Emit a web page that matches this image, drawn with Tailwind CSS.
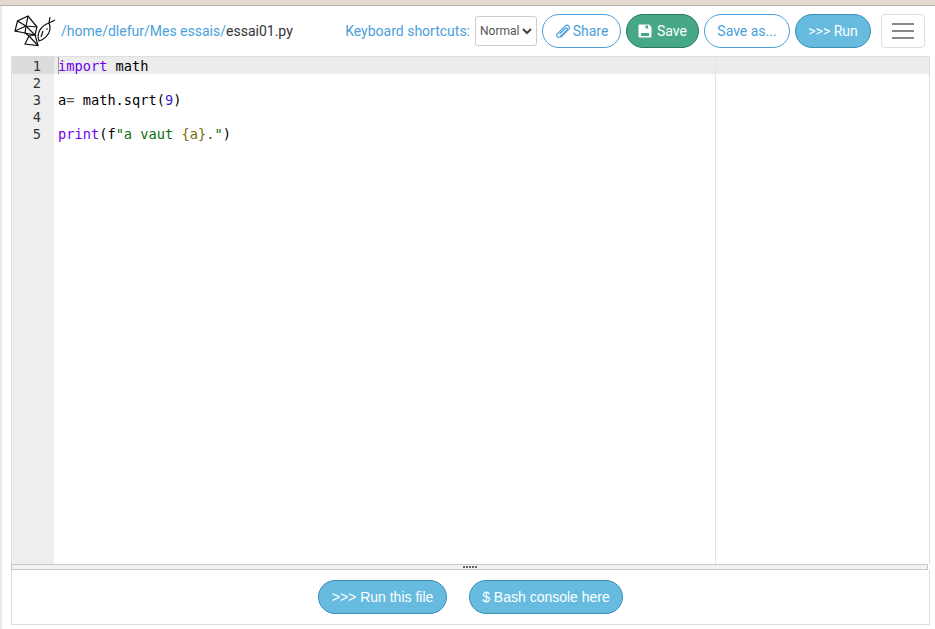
<!DOCTYPE html>
<html lang="en">
  <head>
    <meta charset="UTF-8" />
    <title>essai01.py</title>
    <script src="https://cdn.jsdelivr.net/npm/@tailwindcss/browser@4"></script>
  </head>
  <body class="h-screen overflow-hidden bg-white font-['Roboto',sans-serif]">
    <div class="h-[6px] border-b border-[#b8b2a7] bg-[#e2dacf]"></div>
    <div class="flex h-[623px] flex-col border-l-2 border-[#efe9e0] pl-[9px] pr-[5px]">
      <!-- top bar -->
      <header class="flex h-[50px] items-center pr-[5px] text-[14px] text-[#4a9fdc]">
        <svg class="ml-[3px] h-[32px] w-[44px] shrink-0" viewBox="14 15 44 32" fill="none" stroke="#111" stroke-width="1.2">
          <path d="M15 31 L17.5 21 L28 16 L37 27 L35 35 L38 45.5 L25 44 L29 36 L25 33 Z" />
          <path d="M17.5 21 L26 26 L28 16 M26 26 L37 27 M15 31 L26 26 L25 33 L35 35 L26 26 M29 36 L38 45.5 M29 36 L35 35" />
          <path d="M39 41 C36 33 41 26 49 23 C52 30 48 38 39 41 Z" />
          <path d="M49 23 L50 17 M49 23 L55 20" />
          <path d="M43 31 L41 37" />
          <circle cx="47" cy="29" r="0.8" fill="#111" stroke="none" />
        </svg>
        <div class="ml-[3px]">
          <span>/home/dlefur/Mes essais/</span><span class="text-[#333]">essai01.py</span>
        </div>
        <div class="ml-auto flex items-center">
          <span>Keyboard shortcuts:</span>
          <div class="ml-[5px] flex h-[30px] w-[62px] items-center justify-between rounded-[3px] border border-[#ccc] bg-white pr-[4px] pl-[4px] text-[12px] text-[#555]">
            Normal
            <svg class="h-[8px] w-[10px]" viewBox="0 0 10 8" fill="none" stroke="#444" stroke-width="2"><path d="M1 2 L5 6 L9 2" /></svg>
          </div>
          <button class="ml-[5px] flex h-[34px] w-[79px] items-center justify-center gap-[2px] rounded-full border border-[#4a9fdc] bg-white">
            <svg class="h-[16px] w-[16px]" viewBox="0 0 14 14" fill="none" stroke="#4a9fdc" stroke-width="1"><path d="M5 12.5 L12 5.5 C13.8 3.5 11 0.5 9 2.5 L2 9.5 C0.5 11.5 2.5 13.5 4.5 12 L10.5 6 C11.5 5 10.2 3.6 9 4.6 L4 9.6" /></svg>
            Share
          </button>
          <button class="ml-[5px] flex h-[34px] w-[73px] items-center justify-center gap-[5px] rounded-full border border-[#2b7a5e] bg-[#47a886] text-white">
            <svg class="h-[14px] w-[14px]" viewBox="0 0 14 14" fill="#fff"><path fill-rule="evenodd" d="M0.5 1.5 Q0.5 0.5 1.5 0.5 L11 0.5 L13.5 3 L13.5 12.5 Q13.5 13.5 12.5 13.5 L1.5 13.5 Q0.5 13.5 0.5 12.5 Z M7.5 1.5 L7.5 4.5 L10 4.5 L10 1.5 Z M3 9 L3 12 L11 12 L11 9 Z" /></svg>
            Save
          </button>
          <button class="ml-[5px] h-[34px] w-[86px] rounded-full border border-[#4a9fdc] bg-white">Save as...</button>
          <button class="ml-[5px] h-[34px] w-[76px] rounded-full border border-[#3c8fb5] bg-[#66bbdf] text-white">&gt;&gt;&gt; Run</button>
          <button class="ml-[10px] flex h-[34px] w-[44px] flex-col items-center justify-center gap-[5px] rounded-[4px] border border-[#ddd] bg-white">
            <span class="h-[2px] w-[22px] bg-[#888]"></span>
            <span class="h-[2px] w-[22px] bg-[#888]"></span>
            <span class="h-[2px] w-[22px] bg-[#888]"></span>
          </button>
        </div>
      </header>

      <!-- editor -->
      <div class="relative flex h-[508px] w-[919px] border-x border-t border-[#ddd] font-['DejaVu_Sans_Mono',monospace] text-[13.68px] leading-[17px]">
        <div class="w-[42px] shrink-0 bg-[#eeeeee] text-right text-[#333]">
          <div class="h-[17px] bg-[#dcdcdc] pt-px pr-[13px]">1</div>
          <div class="h-[17px] pt-px pr-[13px]">2</div>
          <div class="h-[17px] pt-px pr-[13px]">3</div>
          <div class="h-[17px] pt-px pr-[13px]">4</div>
          <div class="h-[17px] pt-px pr-[13px]">5</div>
        </div>
        <div class="relative flex-1 text-black">
          <div class="h-[17px] bg-[#ececec] pt-px pl-[4px]"><span class="text-[#6d00f0]">import</span> math</div>
          <div class="h-[17px]"></div>
          <div class="h-[17px] pt-px pl-[4px]">a<span class="text-[#555]">=</span> math.sqrt(<span class="text-[#3a1ad0]">9</span>)</div>
          <div class="h-[17px]"></div>
          <div class="h-[17px] pt-px pl-[4px]"><span class="text-[#6d00f0]">print</span>(f<span class="text-[#0b6b0b]">"a vaut </span><span class="text-[#7a6a00]">{a}</span><span class="text-[#0b6b0b]">."</span>)</div>
          <div class="absolute top-0 left-[4px] h-[17px] w-px bg-[#999]"></div>
          <div class="absolute top-0 bottom-0 left-[661px] w-px bg-[#e4e4e4]"></div>
        </div>
      </div>

      <!-- resizer -->
      <div class="flex h-[6px] w-[917px] items-center justify-center border border-[#c8c8c8] bg-[#f3f3f3]">
        <span class="h-[2px] w-[14px] bg-[repeating-linear-gradient(90deg,#666_0,#666_2px,transparent_2px,transparent_3px)]"></span>
      </div>

      <!-- bottom panel -->
      <div class="flex h-[55px] w-[919px] items-center justify-center gap-[22px] border-x border-b border-[#ddd] font-['Liberation_Sans',sans-serif] text-[14px] text-white">
        <button class="h-[34px] w-[129px] rounded-full border border-[#3c8fb5] bg-[#66bbdf]">&gt;&gt;&gt; Run this file</button>
        <button class="h-[34px] w-[154px] rounded-full border border-[#3c8fb5] bg-[#66bbdf]">$ Bash console here</button>
      </div>
    </div>
  </body>
</html>
